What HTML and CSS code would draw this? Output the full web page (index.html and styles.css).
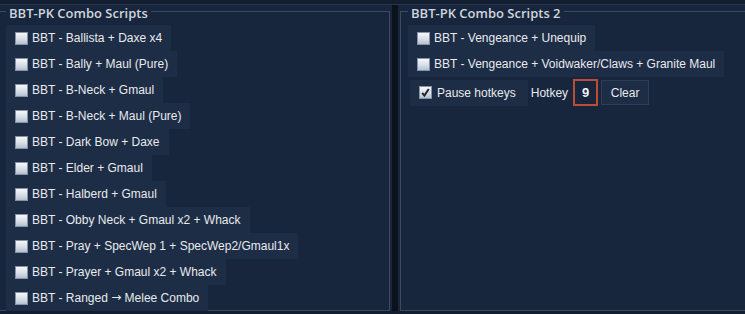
FILE: index.html
```html
<!DOCTYPE html>
<html>
<head>
<meta charset="utf-8">
<link rel="stylesheet" href="styles.css">
</head>
<body>
<div class="topbar"></div>
<div class="main">
  <div class="col col-left">
    <div class="group group-left">
      <span class="title">BBT-PK Combo Scripts</span>
      <div class="list">
        <label class="item"><span class="cb"></span><span>BBT - Ballista + Daxe x4</span></label>
        <label class="item"><span class="cb"></span><span>BBT - Bally + Maul (Pure)</span></label>
        <label class="item"><span class="cb"></span><span>BBT - B-Neck + Gmaul</span></label>
        <label class="item"><span class="cb"></span><span>BBT - B-Neck + Maul (Pure)</span></label>
        <label class="item"><span class="cb"></span><span>BBT - Dark Bow + Daxe</span></label>
        <label class="item"><span class="cb"></span><span>BBT - Elder + Gmaul</span></label>
        <label class="item"><span class="cb"></span><span>BBT - Halberd + Gmaul</span></label>
        <label class="item"><span class="cb"></span><span>BBT - Obby Neck + Gmaul x2 + Whack</span></label>
        <label class="item"><span class="cb"></span><span>BBT - Pray + SpecWep 1 + SpecWep2/Gmaul1x</span></label>
        <label class="item"><span class="cb"></span><span>BBT - Prayer + Gmaul x2 + Whack</span></label>
        <label class="item"><span class="cb"></span><span>BBT - Ranged <span class="arrow">→</span> Melee Combo</span></label>
      </div>
    </div>
  </div>
  <div class="divider"></div>
  <div class="col col-right">
    <div class="group group-right">
      <span class="title">BBT-PK Combo Scripts 2</span>
      <div class="list">
        <label class="item"><span class="cb"></span><span>BBT - Vengeance + Unequip</span></label>
        <label class="item"><span class="cb"></span><span>BBT - Vengeance + Voidwaker/Claws + Granite Maul</span></label>
        <div class="controls">
          <label class="item item-pause"><span class="cb checked"><svg viewBox="0 0 13 13" width="13" height="13"><path d="M3.2 6.8 L5.4 9.6 L9.8 3" fill="none" stroke="#20242c" stroke-width="2"/></svg></span><span>Pause hotkeys</span></label>
          <span class="label">Hotkey</span>
          <span class="keyfield">9</span>
          <span class="btn">Clear</span>
        </div>
      </div>
    </div>
  </div>
</div>
</body>
</html>
```

FILE: styles.css
```css
html, body {
  margin: 0;
  padding: 0;
  background: #121d2f;
  height: 314px;
  overflow: hidden;
  font-family: "Liberation Sans", Arial, sans-serif;
  font-size: 12px;
  color: #e8eaee;
}

.topbar {
  height: 4px;
  background: #121d2f;
  border-bottom: 1px solid #27374e;
}

.main {
  display: flex;
  height: 306px;
}

.col {
  background: #17263d;
  box-sizing: border-box;
}

.col-left {
  width: 392px;
  padding-right: 2px;
}

.divider {
  width: 6px;
  background: #0b121c;
}

.col-right {
  flex: 1;
  padding-left: 2px;
}

.group {
  position: relative;
  margin-top: 6px;
  height: 300px;
  box-sizing: border-box;
  border: 1px solid #394b63;
}

.group-left {
  border-left: none;
}

.group-right {
  border-right: none;
}

.title {
  position: absolute;
  top: -7px;
  left: 6px;
  padding: 0 3px;
  background: #17263d;
  font-family: "Open Sans", "DejaVu Sans", sans-serif;
  font-weight: 600;
  font-size: 13px;
  line-height: 17px;
  color: #cfd4dc;
}

.group-right .title {
  left: 7px;
}

.list {
  display: flex;
  flex-direction: column;
  align-items: flex-start;
  padding-top: 13px;
  padding-left: 6px;
}

.group-right .list {
  padding-left: 7px;
}

.item {
  display: flex;
  align-items: center;
  gap: 4px;
  height: 26px;
  padding: 0 9px;
  background: #1d2d45;
  white-space: nowrap;
}

.arrow {
  font-family: "DejaVu Sans", sans-serif;
  font-size: 12px;
  line-height: 12px;
  position: relative;
  top: -1px;
}

.cb {
  width: 13px;
  height: 13px;
  box-sizing: border-box;
  border: 1px solid #8793a4;
  background: linear-gradient(#f6f8fa, #d8dee7 55%, #b5c1d1);
  display: inline-flex;
}

.cb svg {
  margin: -1px;
}

.controls {
  display: flex;
  align-items: center;
  margin-top: 2px;
  margin-left: 2px;
}

.item-pause {
  padding-right: 12px;
  gap: 5px;
}

.label {
  margin-left: 3px;
}

.keyfield {
  margin-left: 5px;
  width: 25px;
  height: 27px;
  box-sizing: border-box;
  border: 2px solid #b94d37;
  display: flex;
  align-items: center;
  justify-content: center;
  font-weight: bold;
  font-size: 13px;
  color: #f2f3f5;
}

.btn {
  margin-left: 3px;
  width: 48px;
  height: 25px;
  box-sizing: border-box;
  border: 1px solid #2d3e56;
  background: #1d2d45;
  display: flex;
  align-items: center;
  justify-content: center;
}
```
